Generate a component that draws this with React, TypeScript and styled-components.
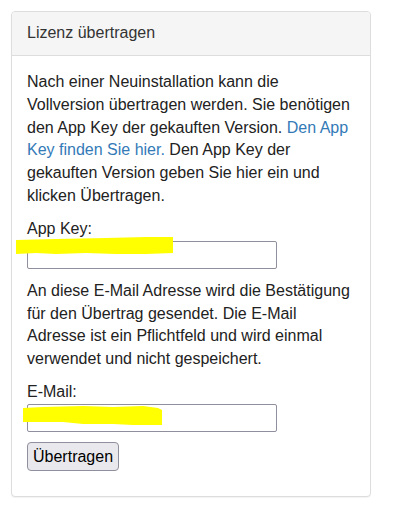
import React from 'react';
import styled, {createGlobalStyle} from 'styled-components';

const GlobalStyle = createGlobalStyle`
	body {
		margin: 0;
		background: #fff;
		font-family: "Liberation Sans", Arial, sans-serif;
		font-size: 16px;
		line-height: 1.42857;
		color: #222;
	}
`;

const Page = styled.div`
	padding: 11px;
`;

const Panel = styled.div`
	width: 360px;
	box-sizing: border-box;
	border: 1px solid #ddd;
	border-radius: 4px;
	background: #fff;
	box-shadow: 0 1px 1px rgba(0, 0, 0, .05);
`;

const PanelHeading = styled.div`
	padding: 10px 15px;
	background: #f5f5f5;
	border-bottom: 1px solid #ddd;
	border-radius: 3px 3px 0 0;
	color: #333;
`;

const PanelBody = styled.form`
	padding: 15px;
`;

const Text = styled.p`
	margin: 0 0 10px;
`;

const Link = styled.a`
	color: #337ab7;
	text-decoration: none;
`;

const Label = styled.label`
	display: block;
`;

const Field = styled.div<{$after?: number}>`
	position: relative;
	width: 250px;
	margin-bottom: ${p => p.$after ?? 11}px;
`;

const Input = styled.input`
	display: block;
	width: 250px;
	height: 28px;
	box-sizing: border-box;
	border: 1px solid #8f8f9d;
	border-radius: 2px;
	padding: 2px 4px;
	font: inherit;
	background: #fff;
`;

const Marker = styled.svg<{$top: number; $left: number}>`
	position: absolute;
	top: ${p => p.$top}px;
	left: ${p => p.$left}px;
	pointer-events: none;
`;

const Button = styled.button`
	display: block;
	margin-bottom: 10px;
	font-family: "Liberation Sans", Arial, sans-serif;
	font-size: 16px;
	line-height: 19px;
	height: 29px;
	padding: 4px 5px;
	color: #000;
	background: #e9e9ed;
	border: 1px solid #8f8f9d;
	border-radius: 4px;
`;

export default function App() {
	return (
		<Page>
			<GlobalStyle/>
			<Panel>
				<PanelHeading>Lizenz übertragen</PanelHeading>
				<PanelBody onSubmit={e => e.preventDefault()}>
					<Text>
						Nach einer Neuinstallation kann die Vollversion übertragen werden. Sie benötigen den App Key der
						gekauften Version. <Link href="#">Den App Key finden Sie hier.</Link> Den App Key der gekauften
						Version geben Sie hier ein und klicken Übertragen.
					</Text>
					<Label htmlFor="appkey">App Key:</Label>
					<Field>
						<Input id="appkey" type="text"/>
						<Marker $top={-4} $left={-11} width="157" height="19" viewBox="0 0 157 19">
							<path d="M0,3 L40,2 L90,1 L130,0 L157,0 L157,16 L130,17 L100,17 L70,16 L40,17 L20,16 L0,17 Z" fill="#ffff00"/>
						</Marker>
					</Field>
					<Text>
						An diese E-Mail Adresse wird die Bestätigung für den Übertrag gesendet. Die E-Mail Adresse ist
						ein Pflichtfeld und wird einmal verwendet und nicht gespeichert.
					</Text>
					<Label htmlFor="email">E-Mail:</Label>
					<Field $after={10}>
						<Input id="email" type="email"/>
						<Marker $top={1} $left={-4} width="139" height="21" viewBox="0 0 139 21">
							<path d="M0,3 L20,2 L60,1 L90,2 L120,1 L135,3 L139,5 L139,20 L110,20 L90,19 L60,19 L40,17 L0,17 Z" fill="#ffff00"/>
						</Marker>
					</Field>
					<Button type="submit">Übertragen</Button>
				</PanelBody>
			</Panel>
		</Page>
	);
}
